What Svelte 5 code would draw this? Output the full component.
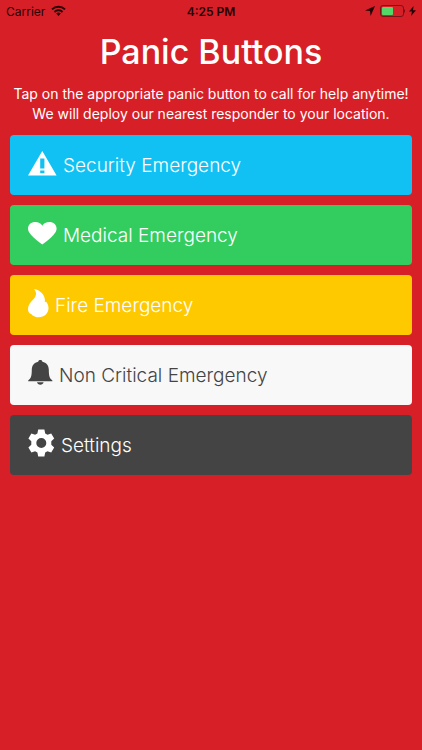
<script lang="ts">
  const actions = [
    { id: 'security', label: 'Security Emergency' },
    { id: 'medical', label: 'Medical Emergency' },
    { id: 'fire', label: 'Fire Emergency' },
    { id: 'other', label: 'Non Critical Emergency' },
    { id: 'settings', label: 'Settings' }
  ];

  let selected = $state('');

  function choose(id: string) {
    selected = id;
  }
</script>

<div class="status-bar">
  <div class="status-left">
    <span>Carrier</span>
    <svg width="15" height="12" viewBox="0 0 15 12" fill="none" stroke="#250406" stroke-width="2">
      <path d="M1 4.4a9.2 9.2 0 0 1 13 0" />
      <path d="M3.4 7a5.8 5.8 0 0 1 8.2 0" />
      <path d="M5.2 8.6a3.3 3.3 0 0 1 4.6 0L7.5 11z" fill="#250406" stroke="none" />
    </svg>
  </div>
  <div class="time">4:25 PM</div>
  <div class="status-right">
    <svg width="10" height="10" viewBox="0 0 10 10" fill="#250406">
      <path d="M10 0 5.6 10 5 5 0 4.4z" />
    </svg>
    <svg width="26" height="12" viewBox="0 0 26 12">
      <rect x="1.5" y="0.5" width="23" height="11" rx="2.5" fill="none" stroke="#7c1118" />
      <rect x="3" y="2" width="11" height="8" rx="1" fill="#53d769" />
      <path d="M25 4c1.5 .6 1.5 3.4 0 4z" fill="#7c1118" />
    </svg>
    <svg width="7" height="10" viewBox="0 0 7 10" fill="#250406">
      <path d="M4.6 0 0 5.6h3L2 10l5-5.8H4z" />
    </svg>
  </div>
</div>

<main>
  <h1>Panic Buttons</h1>
  <p>Tap on the appropriate panic button to call for help anytime! We will deploy our nearest responder to your location.</p>

  <div class="buttons">
    {#each actions as action}
      <button class={action.id} aria-pressed={selected === action.id} onclick={() => choose(action.id)}>
        {#if action.id === 'security'}
          <svg width="29" height="30" viewBox="0 0 29 30" fill="currentColor">
            <path fill-rule="evenodd" d="M14.3 3 28.6 27.500H0zM12.2 10.500v10h4.200v-10zM12.200 22.400v2.800h4.200v-2.800z" />
          </svg>
        {:else if action.id === 'medical'}
          <svg width="29" height="30" viewBox="0 0 29 30" fill="currentColor">
            <path d="M14.3 26.5C11 24 6.3 20.6 3.4 17.3 1.3 15 0 13 0 10.5 0 6.7 3.2 4 7.3 4c3 0 5.6 1.300 7 3.700C15.700 5.300 18.300 4 21.300 4c4.100 0 7.300 2.700 7.300 6.500 0 2.500-1.300 4.500-3.400 6.800-2.900 3.300-7.600 6.700-10.900 9.200z" />
          </svg>
        {:else if action.id === 'fire'}
          <svg width="21" height="30" viewBox="0 0 21 30" fill="currentColor">
            <path d="M6 1c6 1 10.500 5.400 10.900 10.600.1.9 0 1.800-.1 2.600.5-.1.900-.4 1.200-.8 1.500 1.900 2.500 4 2.500 6.600 0 5.300-4.300 9.300-9.800 9.300-2 0-3.700-.5-5.200-1.500-.9-.2-1.700-.8-1.900-1.500C.9 25.300 0 23.400 0 21.200c0-3.700 2-6.300 4.700-9.100C8.200 8.500 9.400 5 6 1z" />
          </svg>
        {:else if action.id === 'other'}
          <svg width="25" height="30" viewBox="0 0 25 30" fill="currentColor">
            <path d="M12.3 2c1.2 0 2 .7 2.1 1.700 4.100.9 6.300 3.700 6.400 7.900.1 6.300.6 9 3.600 10.800v.8H.2v-.8c3-1.800 3.500-4.500 3.600-10.800.1-4.200 2.300-7 6.400-7.900C10.300 2.700 11.100 2 12.300 2zM9 24.300h6.600c-.3 1.600-1.600 2.500-3.300 2.500S9.300 25.900 9 24.300z" />
          </svg>
        {:else}
          <svg width="27" height="30" viewBox="0 0 27 30" fill="currentColor">
            <path fill-rule="evenodd" d="M10.2 1.500h6.200l.8 3.900 2.300 1.300 3.700-1.300 3 5.200-2.900 2.700v3.400l2.900 2.700-3 5.200-3.700-1.300-2.300 1.300-.8 3.900h-6.200l-.8-3.900-2.300-1.300-3.700 1.300-3-5.200 2.900-2.700v-3.400L.4 10.600l3-5.200 3.700 1.300 2.300-1.300zM13.300 10a5 5 0 1 0 0 10 5 5 0 0 0 0-10z" />
          </svg>
        {/if}
        <span>{action.label}</span>
      </button>
    {/each}
  </div>
</main>

<style>
  :global(body) {
    background: #d71f27;
    font-family: Inter, Roboto, "Liberation Sans", sans-serif;
  }

  .status-bar {
    display: grid;
    grid-template-columns: 1fr auto 1fr;
    align-items: center;
    height: 22px;
    padding: 0 6px;
    color: #250406;
    font-size: 12px;
  }

  .status-left,
  .status-right {
    display: flex;
    align-items: center;
    gap: 4px;
  }

  .status-left {
    gap: 6px;
  }

  .status-right {
    justify-content: flex-end;
  }

  .time {
    font-weight: 600;
  }

  main {
    padding: 8px 10px 10px;
    color: #fff;
  }

  h1 {
    margin: 0;
    font-size: 34px;
    font-weight: 500;
    line-height: 44px;
    text-align: center;
  }

  p {
    margin: 10px 0 11px;
    font-size: 14px;
    line-height: 20px;
    text-align: center;
  }

  .buttons {
    display: flex;
    flex-direction: column;
    gap: 10px;
  }

  button {
    display: flex;
    align-items: center;
    gap: 6px;
    width: 100%;
    height: 60px;
    padding: 0 18px;
    border: none;
    border-radius: 4px;
    color: #fff;
    font-family: inherit;
    font-size: 19px;
    font-weight: 300;
    text-align: left;
    cursor: pointer;
  }

  button svg {
    margin-bottom: 4px;
  }

  .security {
    background: #11c1f3;
  }

  .medical {
    background: #33cd5f;
  }

  .fire {
    background: #ffc900;
  }

  .other {
    background: #f8f8f8;
    color: #444;
  }

  .settings {
    background: #444;
  }
</style>
